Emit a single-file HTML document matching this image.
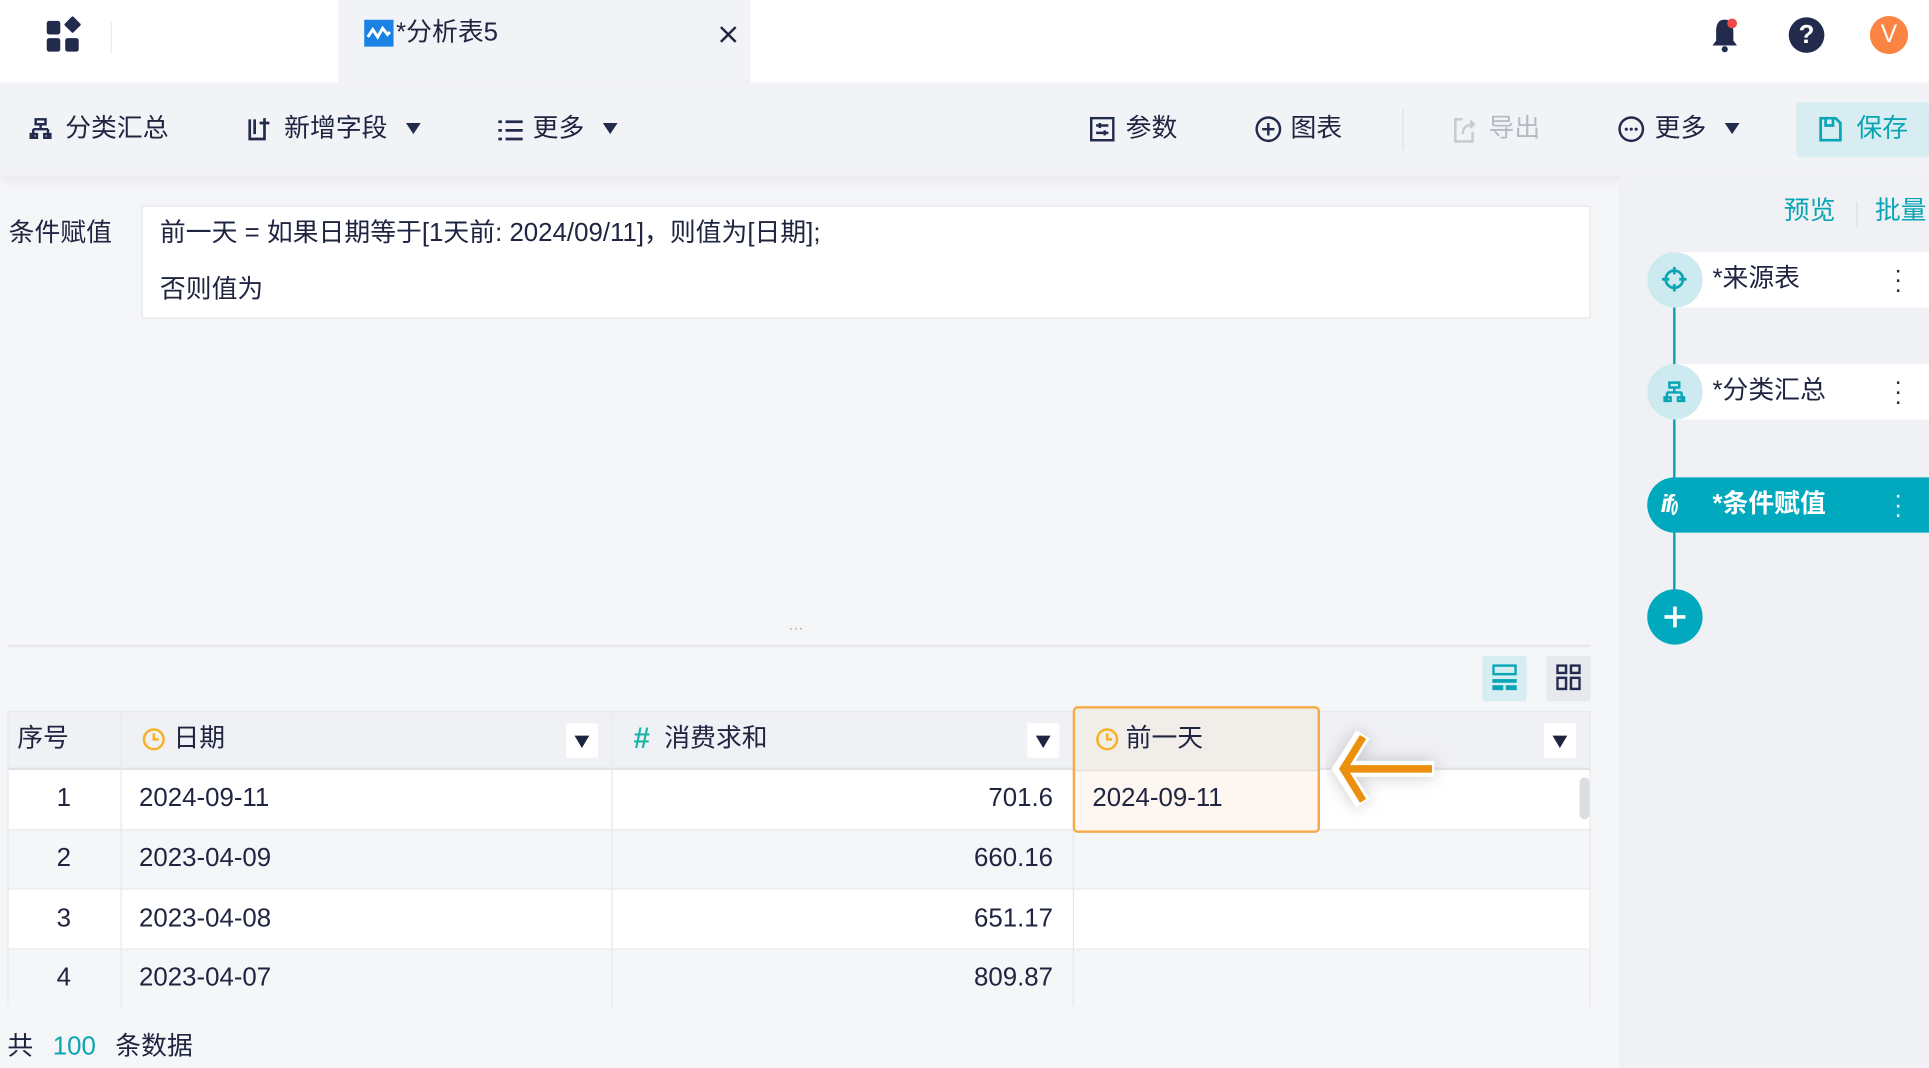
<!DOCTYPE html>
<html><head><meta charset="utf-8"><style>
*{margin:0;padding:0;box-sizing:border-box}
html,body{width:1929px;height:1068px;overflow:hidden;background:#f5f6f8}
#w{position:absolute;left:0;top:0;width:1568px;height:868px;transform:scale(1.2302);transform-origin:0 0;font-family:"Liberation Sans","Noto Sans CJK SC",sans-serif;color:#1f2440;font-size:21px;background:#f5f6f8}
.a{position:absolute;white-space:nowrap}
.t{line-height:26px}
svg{position:absolute}
</style></head><body><div id="w">
<div class="a" style="left:0;top:0;width:1568px;height:67px;background:#fff"></div>
<div class="a" style="left:38px;top:17px;width:11px;height:11px;background:#232b4d;border-radius:2px"></div>
<div class="a" style="left:38px;top:31px;width:11px;height:11px;background:#232b4d;border-radius:2px"></div>
<div class="a" style="left:53px;top:31px;width:11px;height:11px;background:#232b4d;border-radius:2px"></div>
<div class="a" style="left:54px;top:15px;width:10px;height:10px;background:#232b4d;transform:rotate(45deg);border-radius:1px"></div>
<div class="a" style="left:90px;top:18px;width:1px;height:26px;background:#eceef2"></div>
<div class="a" style="left:275px;top:0;width:335px;height:67px;background:#f2f3f6"></div>
<svg style="left:296px;top:16px" width="24" height="22"><rect width="24" height="22" fill="#1a82e2"/><path d="M3 14 L7 8 L11 14 L15 7 L19 12 L21 10" stroke="#fff" stroke-width="2.4" fill="none"/></svg>
<div class="a t" style="left:322px;top:14px">*分析表5</div>
<svg style="left:584px;top:20px" width="16" height="16"><path d="M2 2L14 14M14 2L2 14" stroke="#1f2440" stroke-width="2"/></svg>
<svg style="left:1388px;top:13px" width="28" height="30"><path d="M14 3 C8 3 7 8 7 13 L7 20 L4 24 L24 24 L21 20 L21 13 C21 8 20 3 14 3Z" fill="#232b4d"/><circle cx="14" cy="27" r="2.5" fill="#232b4d"/><circle cx="20" cy="6" r="4" fill="#ef4a4a"/></svg>
<div class="a" style="left:1454px;top:14px;width:29px;height:29px;border-radius:50%;background:#232b4d;color:#fff;font-weight:bold;font-size:21px;text-align:center;line-height:29px">?</div>
<div class="a" style="left:1520px;top:13px;width:31px;height:31px;border-radius:50%;background:#fb8443;color:#fff;font-size:20px;text-align:center;line-height:31px">V</div>
<div class="a" style="left:0;top:67px;width:1568px;height:76px;background:#f2f3f6;box-shadow:0 4px 8px rgba(0,0,0,.05)"></div>
<svg style="left:24px;top:95px" width="18" height="18"><path d="M5 2h8v4H5z M9 6v4 M3 10h12 M3 10v6 M15 10v6 M1 14h5v3H1z M12 14h5v3h-5z" stroke="#232b4d" stroke-width="2" fill="none"/></svg>
<div class="a t" style="left:53px;top:92px">分类汇总</div>
<svg style="left:201px;top:95px" width="20" height="20"><path d="M2 2v16h12V7 M6 2v12 M14 1v8 M10 5h8" stroke="#232b4d" stroke-width="2.2" fill="none"/></svg>
<div class="a t" style="left:231px;top:92px">新增字段</div>
<div class="a" style="left:330px;top:100px;border:6px solid transparent;border-top:9px solid #232b4d;border-bottom:0"></div>
<svg style="left:405px;top:97px" width="20" height="18"><path d="M0 2h3M6 2h14M0 9h3M6 9h14M0 16h3M6 16h14" stroke="#232b4d" stroke-width="2.2"/></svg>
<div class="a t" style="left:433px;top:92px">更多</div>
<div class="a" style="left:490px;top:100px;border:6px solid transparent;border-top:9px solid #232b4d;border-bottom:0"></div>
<svg style="left:886px;top:95px" width="20" height="20"><rect x="1" y="1" width="18" height="18" fill="none" stroke="#232b4d" stroke-width="2"/><path d="M5 7h10M5 13h10M8 5v4M12 11v4" stroke="#232b4d" stroke-width="2"/></svg>
<div class="a t" style="left:915px;top:92px">参数</div>
<svg style="left:1020px;top:94px" width="22" height="22"><circle cx="11" cy="11" r="9.5" fill="none" stroke="#232b4d" stroke-width="2"/><path d="M11 6v10M6 11h10" stroke="#232b4d" stroke-width="2"/></svg>
<div class="a t" style="left:1049px;top:92px">图表</div>
<div class="a" style="left:1140px;top:88px;width:1px;height:34px;background:#e0e2e7"></div>
<svg style="left:1181px;top:95px" width="20" height="22"><path d="M8 2H2v18h14v-8 M8 14c0-5 3-8 9-8 M14 3l3 3-3 3" stroke="#c7cad3" stroke-width="2" fill="none"/></svg>
<div class="a t" style="left:1210px;top:92px;color:#b6bac4">导出</div>
<svg style="left:1315px;top:94px" width="22" height="22"><circle cx="11" cy="11" r="9.5" fill="none" stroke="#232b4d" stroke-width="2"/><circle cx="7" cy="11" r="1.3" fill="#232b4d"/><circle cx="11" cy="11" r="1.3" fill="#232b4d"/><circle cx="15" cy="11" r="1.3" fill="#232b4d"/></svg>
<div class="a t" style="left:1345px;top:92px">更多</div>
<div class="a" style="left:1402px;top:100px;border:6px solid transparent;border-top:9px solid #232b4d;border-bottom:0"></div>
<div class="a" style="left:1460px;top:83px;width:108px;height:45px;background:#d8edf1;border-radius:3px"></div>
<svg style="left:1478px;top:95px" width="20" height="20"><path d="M2 1h12l4 4v14H2z M6 1v6h6V1" stroke="#0aa5b5" stroke-width="2.2" fill="none"/></svg>
<div class="a t" style="left:1509px;top:92px;color:#0aa5b5">保存</div>
<div class="a t" style="left:7px;top:177px">条件赋值</div>
<div class="a" style="left:115px;top:167px;width:1178px;height:92px;background:#fff;border:1px solid #e4e6eb"></div>
<div class="a t" style="left:130px;top:177px">前一天 = 如果日期等于[1天前: 2024/09/11]，则值为[日期];</div>
<div class="a t" style="left:130px;top:223px">否则值为</div>
<div class="a" style="left:6px;top:524px;width:1287px;height:2px;background:#e6e8ec"></div>
<div class="a" style="left:641px;top:503px;font-size:12px;color:#aaa">···</div>
<div class="a" style="left:1205px;top:533px;width:36px;height:37px;background:#d6edf2;border-radius:2px"></div>
<svg style="left:1213px;top:540px" width="20" height="22"><rect x="1" y="1" width="18" height="7" fill="none" stroke="#0aa5b5" stroke-width="2"/><rect x="0" y="12" width="20" height="3" fill="#0aa5b5"/><rect x="0" y="17" width="9" height="4" fill="#0aa5b5"/><rect x="11" y="17" width="9" height="4" fill="#0aa5b5"/></svg>
<div class="a" style="left:1257px;top:533px;width:36px;height:37px;background:#e8e9ed;border-radius:2px"></div>
<svg style="left:1265px;top:540px" width="20" height="22"><g fill="none" stroke="#232b4d" stroke-width="2"><rect x="1" y="1" width="7" height="6"/><rect x="12" y="1" width="7" height="6"/><rect x="1" y="11" width="7" height="9"/><rect x="12" y="11" width="7" height="9"/></g></svg>
<div class="a" style="left:6px;top:578px;width:1287px;height:48px;background:#f0f1f5;border-top:1px solid #e6e8ec;border-bottom:2px solid #e1e3e8"></div>
<div class="a" style="left:6px;top:626px;width:1287px;height:48px;background:#fff"></div>
<div class="a" style="left:6px;top:674px;width:1287px;height:48px;background:#f5f6f8;border-top:1px solid #e8eaee"></div>
<div class="a" style="left:6px;top:722px;width:1287px;height:49px;background:#fff;border-top:1px solid #e8eaee"></div>
<div class="a" style="left:6px;top:771px;width:1287px;height:47px;background:#f5f6f8;border-top:1px solid #e8eaee"></div>
<div class="a" style="left:6px;top:578px;width:1px;height:240px;background:#e6e8ec"></div>
<div class="a" style="left:98px;top:578px;width:1px;height:240px;background:#e6e8ec"></div>
<div class="a" style="left:497px;top:578px;width:1px;height:240px;background:#e6e8ec"></div>
<div class="a" style="left:872px;top:578px;width:1px;height:240px;background:#e6e8ec"></div>
<div class="a" style="left:1292px;top:578px;width:1px;height:240px;background:#e6e8ec"></div>
<div class="a t" style="left:14px;top:588px">序号</div>
<svg style="left:115px;top:591px" width="20" height="20"><circle cx="10" cy="10" r="8" fill="none" stroke="#f6b125" stroke-width="2"/><path d="M10 5v5h4" stroke="#f6b125" stroke-width="2" fill="none"/></svg>
<div class="a t" style="left:141px;top:588px">日期</div>
<div class="a t" style="left:515px;top:588px;color:#1fb5a6;font-size:24px;font-weight:bold">#</div>
<div class="a t" style="left:540px;top:588px">消费求和</div>
<div class="a" style="left:460px;top:588px;width:26px;height:28px;background:#fff"></div>
<div class="a" style="left:467px;top:598px;border:6px solid transparent;border-top:10px solid #1f2440;border-bottom:0"></div>
<div class="a" style="left:835px;top:588px;width:26px;height:28px;background:#fff"></div>
<div class="a" style="left:842px;top:598px;border:6px solid transparent;border-top:10px solid #1f2440;border-bottom:0"></div>
<div class="a" style="left:1255px;top:588px;width:26px;height:28px;background:#fff"></div>
<div class="a" style="left:1262px;top:598px;border:6px solid transparent;border-top:10px solid #1f2440;border-bottom:0"></div>
<div class="a t" style="left:46px;top:636px">1</div>
<div class="a t" style="left:46px;top:685px">2</div>
<div class="a t" style="left:46px;top:734px">3</div>
<div class="a t" style="left:46px;top:782px">4</div>
<div class="a t" style="left:113px;top:636px">2024-09-11</div>
<div class="a t" style="left:113px;top:685px">2023-04-09</div>
<div class="a t" style="left:113px;top:734px">2023-04-08</div>
<div class="a t" style="left:113px;top:782px">2023-04-07</div>
<div class="a t" style="right:712px;top:636px">701.6</div>
<div class="a t" style="right:712px;top:685px">660.16</div>
<div class="a t" style="right:712px;top:734px">651.17</div>
<div class="a t" style="right:712px;top:782px">809.87</div>
<div class="a" style="left:1284px;top:632px;width:8px;height:34px;background:#dcdde1;border-radius:4px"></div>
<div class="a" style="left:872px;top:574px;width:201px;height:103px;border:2px solid #f5aa48;border-radius:4px;overflow:hidden">
<div style="height:51px;background:#f1eee9;border-bottom:1px solid #e2ddd6"></div><div style="height:50px;background:#fef6f0"></div></div>
<svg style="left:890px;top:591px" width="20" height="20"><circle cx="10" cy="10" r="8" fill="none" stroke="#f6b125" stroke-width="2"/><path d="M10 5v5h4" stroke="#f6b125" stroke-width="2" fill="none"/></svg>
<div class="a t" style="left:915px;top:588px">前一天</div>
<div class="a t" style="left:888px;top:636px">2024-09-11</div>
<svg style="left:1078px;top:585px" width="110" height="80"><defs><filter id="s" x="-50%" y="-50%" width="200%" height="200%"><feGaussianBlur stdDeviation="6"/></filter></defs><path d="M30 12 L12 40 L30 68 M14 40 H88" stroke="#888" stroke-opacity=".35" stroke-width="16" fill="none" filter="url(#s)"/><path d="M30 12 L12 40 L30 68 M14 40 H88" stroke="#fff" stroke-width="13" fill="none"/><path d="M30 14 L14 40 L30 66 M16 40 H86" stroke="#ec8f0c" stroke-width="6" fill="none"/></svg>
<div class="a t" style="left:6px;top:838px">共 <span style="color:#0aa5b5;margin:0 10px">100</span> 条数据</div>
<div class="a" style="left:1316px;top:143px;width:252px;height:725px;background:#f0f1f4"></div>
<div class="a t" style="left:1450px;top:159px;color:#0aa5b5">预览</div>
<div class="a" style="left:1509px;top:164px;width:1px;height:20px;background:#dcdfe5"></div>
<div class="a t" style="left:1524px;top:159px;color:#0aa5b5">批量</div>
<div class="a" style="left:1360px;top:240px;width:2px;height:250px;background:#0aa5b5"></div>
<div class="a" style="left:1361px;top:205px;width:207px;height:45px;background:#fff"></div>
<div class="a" style="left:1339px;top:205px;width:45px;height:45px;border-radius:50%;background:#cdeaf0"></div>
<svg style="left:1350px;top:216px" width="22" height="22"><circle cx="11" cy="11" r="7" fill="none" stroke="#0aa5b5" stroke-width="2.2"/><path d="M11 1v6M11 15v6M1 11h6M15 11h6" stroke="#0aa5b5" stroke-width="2.2"/></svg>
<div class="a t" style="left:1392px;top:214px">*来源表</div>
<div class="a" style="left:1541px;top:216px;color:#232b4d;font-weight:bold;line-height:8px;font-size:14px">·<br>·<br>·</div>
<div class="a" style="left:1361px;top:296px;width:207px;height:45px;background:#fff"></div>
<div class="a" style="left:1339px;top:296px;width:45px;height:45px;border-radius:50%;background:#cdeaf0"></div>
<svg style="left:1352px;top:309px" width="18" height="18"><path d="M5 2h8v4H5z M9 6v4 M3 10h12 M3 10v6 M15 10v6 M1 14h5v3H1z M12 14h5v3h-5z" stroke="#0aa5b5" stroke-width="2" fill="none"/></svg>
<div class="a t" style="left:1392px;top:305px">*分类汇总</div>
<div class="a" style="left:1541px;top:307px;color:#232b4d;font-weight:bold;line-height:8px;font-size:14px">·<br>·<br>·</div>
<div class="a" style="left:1339px;top:388px;width:229px;height:45px;background:#00a9bd;border-radius:23px 0 0 23px"></div>
<div class="a t" style="left:1350px;top:397px;color:#fff;font-style:italic;font-weight:bold;font-size:20px;letter-spacing:-2px">if<span style="font-size:12px">()</span></div>
<div class="a t" style="left:1392px;top:397px;color:#fff;font-weight:bold">*条件赋值</div>
<div class="a" style="left:1541px;top:399px;color:#fff;font-weight:bold;line-height:8px;font-size:14px">·<br>·<br>·</div>
<div class="a" style="left:1339px;top:479px;width:45px;height:45px;border-radius:50%;background:#00a9bd"></div>
<svg style="left:1351px;top:491px" width="21" height="21"><path d="M10.5 2v17M2 10.5h17" stroke="#fff" stroke-width="3"/></svg>
</div></body></html>
